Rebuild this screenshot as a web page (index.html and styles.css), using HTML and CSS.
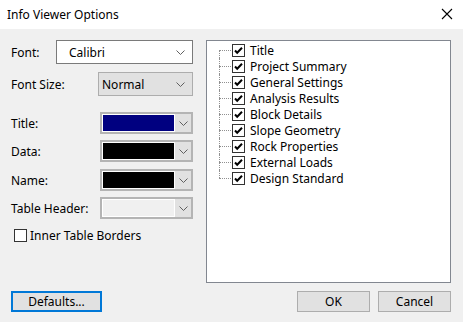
FILE: index.html
```html
<!DOCTYPE html>
<html lang="en">
<head>
    <meta charset="UTF-8">
    <title>Info Viewer Options</title>
    <link rel="stylesheet" href="styles.css">
</head>
<body>
    <div class="dialog">
        <div class="titlebar">
            <span class="title">Info Viewer Options</span>
            <svg class="close" width="12" height="12" viewBox="0 0 12 12">
                <path d="M1 1 L11 11 M11 1 L1 11" stroke="#000" stroke-width="1.1" fill="none"/>
            </svg>
        </div>

        <div class="main">
            <div class="left">
                <div class="row row-font">
                    <label>Font:</label>
                    <div class="combo combo-font">
                        <span>Calibri</span>
                        <svg class="chev" width="9" height="5" viewBox="0 0 9 5"><path d="M0.5 0.5 L4.5 4.5 L8.5 0.5" stroke="#606060" fill="none"/></svg>
                    </div>
                </div>
                <div class="row row-size">
                    <label>Font Size:</label>
                    <div class="combo combo-size">
                        <span>Normal</span>
                        <svg class="chev" width="9" height="5" viewBox="0 0 9 5"><path d="M0.5 0.5 L4.5 4.5 L8.5 0.5" stroke="#606060" fill="none"/></svg>
                    </div>
                </div>
                <div class="row row-color row-title">
                    <label>Title:</label>
                    <div class="color-combo">
                        <div class="swatch swatch-navy"></div>
                        <div class="color-btn"><svg width="9" height="5" viewBox="0 0 9 5"><path d="M0.5 0.5 L4.5 4.5 L8.5 0.5" stroke="#606060" fill="none"/></svg></div>
                    </div>
                </div>
                <div class="row row-color row-data">
                    <label>Data:</label>
                    <div class="color-combo">
                        <div class="swatch swatch-black"></div>
                        <div class="color-btn"><svg width="9" height="5" viewBox="0 0 9 5"><path d="M0.5 0.5 L4.5 4.5 L8.5 0.5" stroke="#606060" fill="none"/></svg></div>
                    </div>
                </div>
                <div class="row row-color row-name">
                    <label>Name:</label>
                    <div class="color-combo">
                        <div class="swatch swatch-black"></div>
                        <div class="color-btn"><svg width="9" height="5" viewBox="0 0 9 5"><path d="M0.5 0.5 L4.5 4.5 L8.5 0.5" stroke="#606060" fill="none"/></svg></div>
                    </div>
                </div>
                <div class="row row-color row-header">
                    <label>Table Header:</label>
                    <div class="color-combo">
                        <div class="swatch swatch-light"></div>
                        <div class="color-btn"><svg width="9" height="5" viewBox="0 0 9 5"><path d="M0.5 0.5 L4.5 4.5 L8.5 0.5" stroke="#606060" fill="none"/></svg></div>
                    </div>
                </div>
                <div class="check-row">
                    <span class="box"></span>
                    <span>Inner Table Borders</span>
                </div>
            </div>

            <div class="tree-panel">
                <ul class="tree">
                    <li><span class="tick"></span>Title</li>
                    <li><span class="tick"></span>Project Summary</li>
                    <li><span class="tick"></span>General Settings</li>
                    <li><span class="tick"></span>Analysis Results</li>
                    <li><span class="tick"></span>Block Details</li>
                    <li><span class="tick"></span>Slope Geometry</li>
                    <li><span class="tick"></span>Rock Properties</li>
                    <li><span class="tick"></span>External Loads</li>
                    <li><span class="tick"></span>Design Standard</li>
                </ul>
            </div>
        </div>

        <div class="footer">
            <button class="btn btn-default">Defaults...</button>
            <div class="spacer"></div>
            <button class="btn">OK</button>
            <button class="btn">Cancel</button>
        </div>
    </div>

    <script>
        // draw the check marks in the tree
        const tickSvg = '<svg width="13" height="13" viewBox="0 0 13 13"><rect x="0.5" y="0.5" width="12" height="12" fill="#fff" stroke="#333"/><path d="M3 6.5 L5.2 8.8 L10 3.8" stroke="#000" stroke-width="2" fill="none"/></svg>';
        document.querySelectorAll('.tick').forEach(function (el) {
            el.innerHTML = tickSvg;
        });
    </script>
</body>
</html>
```

FILE: styles.css
```css
* {
    box-sizing: border-box;
}
body {
    margin: 0;
    font-family: "Noto Sans", "Open Sans", sans-serif;
    font-size: 12px;
    color: #000;
    background-color: #f0f0f0;
}
.dialog {
    width: 463px;
    height: 322px;
    display: flex;
    flex-direction: column;
}
.titlebar {
    height: 29px;
    background-color: #fff;
    display: flex;
    align-items: center;
    padding: 0 10px 1px 7px;
}
.title {
    flex: 1;
    color: #000;
}
.close {
    display: block;
}
.main {
    display: flex;
    padding: 11px 12px 0 11px;
    gap: 13px;
}
.left {
    width: 182px;
    display: flex;
    flex-direction: column;
}
.row {
    display: flex;
    align-items: center;
    justify-content: space-between;
}
.row label {
    white-space: nowrap;
}
.combo {
    height: 24px;
    display: flex;
    align-items: center;
    justify-content: space-between;
}
.combo-font {
    width: 137px;
    border: 1px solid #7a7a7a;
    background-color: #fff;
    padding: 0 7px 0 12px;
}
.row-size {
    margin-top: 8px;
}
.combo-size {
    width: 95px;
    border: 1px solid #adadad;
    background-color: #e1e1e1;
    padding: 0 7px 0 3px;
}
.row-title {
    margin-top: 16px;
}
.row-data {
    margin-top: 6px;
}
.row-name {
    margin-top: 7px;
}
.row-header {
    margin-top: 6px;
}
.color-combo {
    width: 93px;
    height: 22px;
    display: flex;
    border: 2px solid #b4b4b4;
    background-color: #fff;
}
.swatch {
    flex: 1;
    margin: 1px;
}
.swatch-navy {
    background-color: #000080;
}
.swatch-black {
    background-color: #000;
}
.swatch-light {
    background-color: #f0f0f0;
}
.color-btn {
    width: 16px;
    background-color: #e1e1e1;
    display: flex;
    align-items: center;
    justify-content: center;
}
.check-row {
    display: flex;
    align-items: center;
    gap: 3px;
    margin-top: 8px;
    padding-left: 3px;
}
.box {
    width: 13px;
    height: 13px;
    border: 1px solid #333;
    background-color: #fff;
}
.tree-panel {
    flex: 1;
    height: 243px;
    background-color: #fff;
    border: 1px solid #828790;
    padding-top: 1px;
}
.tree {
    list-style: none;
    margin: 0;
    padding: 0 0 0 25px;
}
.tree li {
    position: relative;
    height: 16px;
    display: flex;
    align-items: center;
    gap: 5px;
}
.tree li::before {
    content: "";
    position: absolute;
    left: -13px;
    top: 8px;
    width: 12px;
    border-top: 1px dotted #909090;
}
.tree li::after {
    content: "";
    position: absolute;
    left: -13px;
    top: 0;
    bottom: 0;
    border-left: 1px dotted #909090;
}
.tree li:first-child::after {
    top: 8px;
}
.tree li:last-child::after {
    bottom: 8px;
}
.tick svg {
    display: block;
}
.footer {
    display: flex;
    gap: 8px;
    padding: 8px 12px 0 11px;
}
.spacer {
    flex: 1;
}
.btn {
    height: 21px;
    width: 73px;
    font-family: inherit;
    font-size: 12px;
    color: #000;
    background-color: #e1e1e1;
    border: 1px solid #adadad;
    padding: 0;
}
.btn-default {
    width: 91px;
    border: 2px solid #0078d7;
}
```
